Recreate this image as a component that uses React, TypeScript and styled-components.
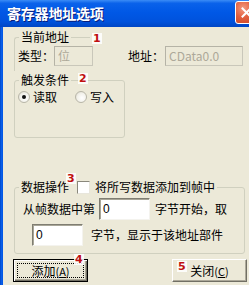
import styled, { createGlobalStyle } from "styled-components";

const GlobalStyle = createGlobalStyle`
    html, body {
        margin: 0;
        padding: 0;
        background: #ece9d8;
    }
    body {
        font-family: "Noto Sans CJK SC", "Liberation Sans", sans-serif;
        font-size: 12px;
        line-height: 14px;
        color: #000;
    }
`

const Window = styled.div`
    width: 249px;
    height: 285px;
    overflow: hidden;
    display: flex;
    flex-direction: column;
    background: #ece9d8;
`

const TitleBar = styled.div`
    height: 27px;
    flex: none;
    display: flex;
    align-items: center;
    justify-content: space-between;
    padding-left: 7px;
    background: linear-gradient(to bottom, #3b8cf6 0%, #0a62ea 12%, #0058e6 45%, #0052dc 80%, #0046c4 100%);
    overflow: hidden;
`

const TitleText = styled.div`
    font-size: 14px;
    font-weight: bold;
    line-height: 16px;
    color: #fff;
    letter-spacing: -0.2px;
    text-shadow: 1px 1px 0 #0a1e7a;
    margin-top: -1px;
`

const CloseButton = styled.div`
    width: 21px;
    height: 21px;
    flex: none;
    margin-right: -9px;
    margin-top: -2px;
    border: 1px solid #fff;
    border-radius: 3px;
    background: radial-gradient(circle at 35% 30%, #f39a80 0%, #e2603f 45%, #c8401f 100%);
    display: flex;
    align-items: center;
    justify-content: center;
`

const Frame = styled.div`
    flex: 1;
    display: flex;
`

const LeftEdge = styled.div`
    width: 3px;
    flex: none;
    background: linear-gradient(to right, #0046c8, #0a5ee8, #0055e5);
`

const Body = styled.div`
    flex: 1;
    display: flex;
    flex-direction: column;
    padding-left: 11px;
`

const Group = styled.fieldset<{ $width: number; $open?: boolean; $mt: number; $pb: number }>`
    box-sizing: border-box;
    width: ${p => p.$width}px;
    min-width: 0;
    min-inline-size: 0;
    margin: ${p => p.$mt}px 0 0 0;
    padding: 0 0 ${p => p.$pb}px 0;
    border: 1px solid #d0d0bf;
    border-radius: 3px;
    ${p => p.$open ? `
        border-right: none;
        border-bottom: none;
        border-radius: 3px 0 0 0;
    ` : ""}
`

const Legend = styled.legend`
    position: relative;
    margin-left: 4px;
    padding: 0 2px;
    line-height: 14px;
    display: flex;
    align-items: center;
    white-space: nowrap;
`

const Badge = styled.span<{ $left: number; $top: number }>`
    position: absolute;
    left: ${p => p.$left}px;
    top: ${p => p.$top}px;
    font-family: "DejaVu Sans", sans-serif;
    font-weight: bold;
    font-size: 11px;
    line-height: 11px;
    padding: 0 1px;
    color: #c01010;
    background: rgba(255, 255, 255, 0.85);
`

const Content = styled.div<{ $pt: number; $pl: number }>`
    padding: ${p => p.$pt}px 0 0 ${p => p.$pl}px;
    display: flex;
    flex-direction: column;
    gap: 4px;
`

const Row = styled.div<{ $indent?: number }>`
    display: flex;
    align-items: center;
    white-space: nowrap;
    width: max-content;
    margin-left: ${p => p.$indent ?? 0}px;
`

const Label = styled.span<{ $ml?: number }>`
    margin-left: ${p => p.$ml ?? 0}px;
`

const TextBox = styled.div<{ $width: number; $height: number; $disabled?: boolean; $ml?: number }>`
    box-sizing: border-box;
    width: ${p => p.$width}px;
    height: ${p => p.$height}px;
    margin-left: ${p => p.$ml ?? 0}px;
    padding-left: 3px;
    display: flex;
    align-items: center;
    font-family: ${p => p.$disabled ? `"Noto Sans CJK SC", "Liberation Sans", sans-serif` : `"Liberation Sans", sans-serif`};
    font-size: 12px;
    ${p => p.$disabled ? `
        border: 1px solid #c9c7ba;
        border-top-color: #b5b3a6;
        border-left-color: #b5b3a6;
        background: #ece9d8;
        color: #aca899;
    ` : `
        border: 1px solid #7f7d72;
        border-right-color: #f4f3ee;
        border-bottom-color: #f4f3ee;
        box-shadow: inset 1px 1px 0 #a8a698;
        background: #fff;
        color: #000;
    `}
`

const RadioItem = styled.label<{ $ml?: number }>`
    display: flex;
    align-items: center;
    gap: 3px;
    margin-left: ${p => p.$ml ?? 0}px;
`

const RadioCircle = styled.span<{ $checked?: boolean }>`
    box-sizing: border-box;
    width: 12px;
    height: 12px;
    border-radius: 50%;
    border: 1px solid #b8b6a8;
    background: radial-gradient(circle at 60% 60%, #ffffff 0%, #f2f1ea 55%, #d6d3c6 100%);
    display: flex;
    align-items: center;
    justify-content: center;
    &::after {
        content: "";
        width: 4px;
        height: 4px;
        border-radius: 50%;
        background: ${p => p.$checked ? "#111" : "transparent"};
    }
`

const CheckBox = styled.span`
    box-sizing: border-box;
    width: 13px;
    height: 13px;
    margin: 0 5px 0 8px;
    border: 1px solid #8a887c;
    border-right-color: #e8e6dc;
    border-bottom-color: #e8e6dc;
    background: #fff;
`

const ButtonRow = styled.div`
    display: flex;
    justify-content: space-between;
    margin: 5px 2px 0 -1px;
`

const Button = styled.div<{ $default?: boolean }>`
    position: relative;
    box-sizing: border-box;
    width: 75px;
    height: 23px;
    padding: 3px;
    display: flex;
    align-items: stretch;
    background: #ece9d8;
    border: 1px solid;
    border-color: #fff #716f64 #716f64 #fff;
    box-shadow: inset -1px -1px 0 #aca899;
    ${p => p.$default ? `
        border-color: #000;
        box-shadow: inset 1px 1px 0 #fff, inset -1px -1px 0 #716f64, inset -2px -2px 0 #aca899;
    ` : ""}
`

const ButtonFace = styled.span<{ $focus?: boolean }>`
    flex: 1;
    display: flex;
    align-items: center;
    justify-content: center;
    line-height: 14px;
    border: 1px dotted ${p => p.$focus ? "#000" : "transparent"};
`

const Mnemonic = styled.span`
    font-size: 11px;
    u { text-decoration-thickness: 1px; }
`

export default function App() {
    return (
        <Window>
            <GlobalStyle />
            <TitleBar>
                <TitleText>寄存器地址选项</TitleText>
                <CloseButton>
                    <svg width="11" height="11" viewBox="0 0 11 11">
                        <path d="M1.5 1.5 L9.5 9.5 M9.5 1.5 L1.5 9.5" stroke="#fff" strokeWidth="2" strokeLinecap="square" />
                    </svg>
                </CloseButton>
            </TitleBar>
            <Frame>
                <LeftEdge />
                <Body>
                    <Group $width={76} $open $mt={3} $pb={5}>
                        <Legend>
                            当前地址
                            <Badge $left={73} $top={3}>1</Badge>
                        </Legend>
                        <Content $pt={2} $pl={3}>
                            <Row>
                                <Label>类型：</Label>
                                <TextBox $width={39} $height={20} $disabled>位</TextBox>
                                <Label $ml={35}>地址：</Label>
                                <TextBox $width={78} $height={20} $disabled $ml={1}>CData0.0</TextBox>
                            </Row>
                        </Content>
                    </Group>

                    <Group $width={111} $mt={2} $pb={33}>
                        <Legend>
                            触发条件
                            <Badge $left={59} $top={0}>2</Badge>
                        </Legend>
                        <Content $pt={3} $pl={3}>
                            <Row>
                                <RadioItem>
                                    <RadioCircle $checked />
                                    读取
                                </RadioItem>
                                <RadioItem $ml={18}>
                                    <RadioCircle />
                                    写入
                                </RadioItem>
                            </Row>
                        </Content>
                    </Group>

                    <Group $width={231} $mt={42} $pb={7}>
                        <Legend>
                            数据操作
                            <CheckBox />
                            将所写数据添加到帧中
                            <Badge $left={47} $top={-7}>3</Badge>
                        </Legend>
                        <Content $pt={4} $pl={8}>
                            <Row>
                                <Label>从帧数据中第</Label>
                                <TextBox $width={51} $height={22} $ml={4}>0</TextBox>
                                <Label $ml={5}>字节开始，取</Label>
                            </Row>
                            <Row $indent={9}>
                                <TextBox $width={51} $height={22}>0</TextBox>
                                <Label $ml={8}>字节，显示于该地址部件</Label>
                            </Row>
                        </Content>
                    </Group>

                    <ButtonRow>
                        <Button $default>
                            <ButtonFace $focus>添加<Mnemonic>(<u>A</u>)</Mnemonic></ButtonFace>
                            <Badge $left={60} $top={-6}>4</Badge>
                        </Button>
                        <Button>
                            <ButtonFace>关闭<Mnemonic>(<u>C</u>)</Mnemonic></ButtonFace>
                            <Badge $left={4} $top={1}>5</Badge>
                        </Button>
                    </ButtonRow>
                </Body>
            </Frame>
        </Window>
    )
}
